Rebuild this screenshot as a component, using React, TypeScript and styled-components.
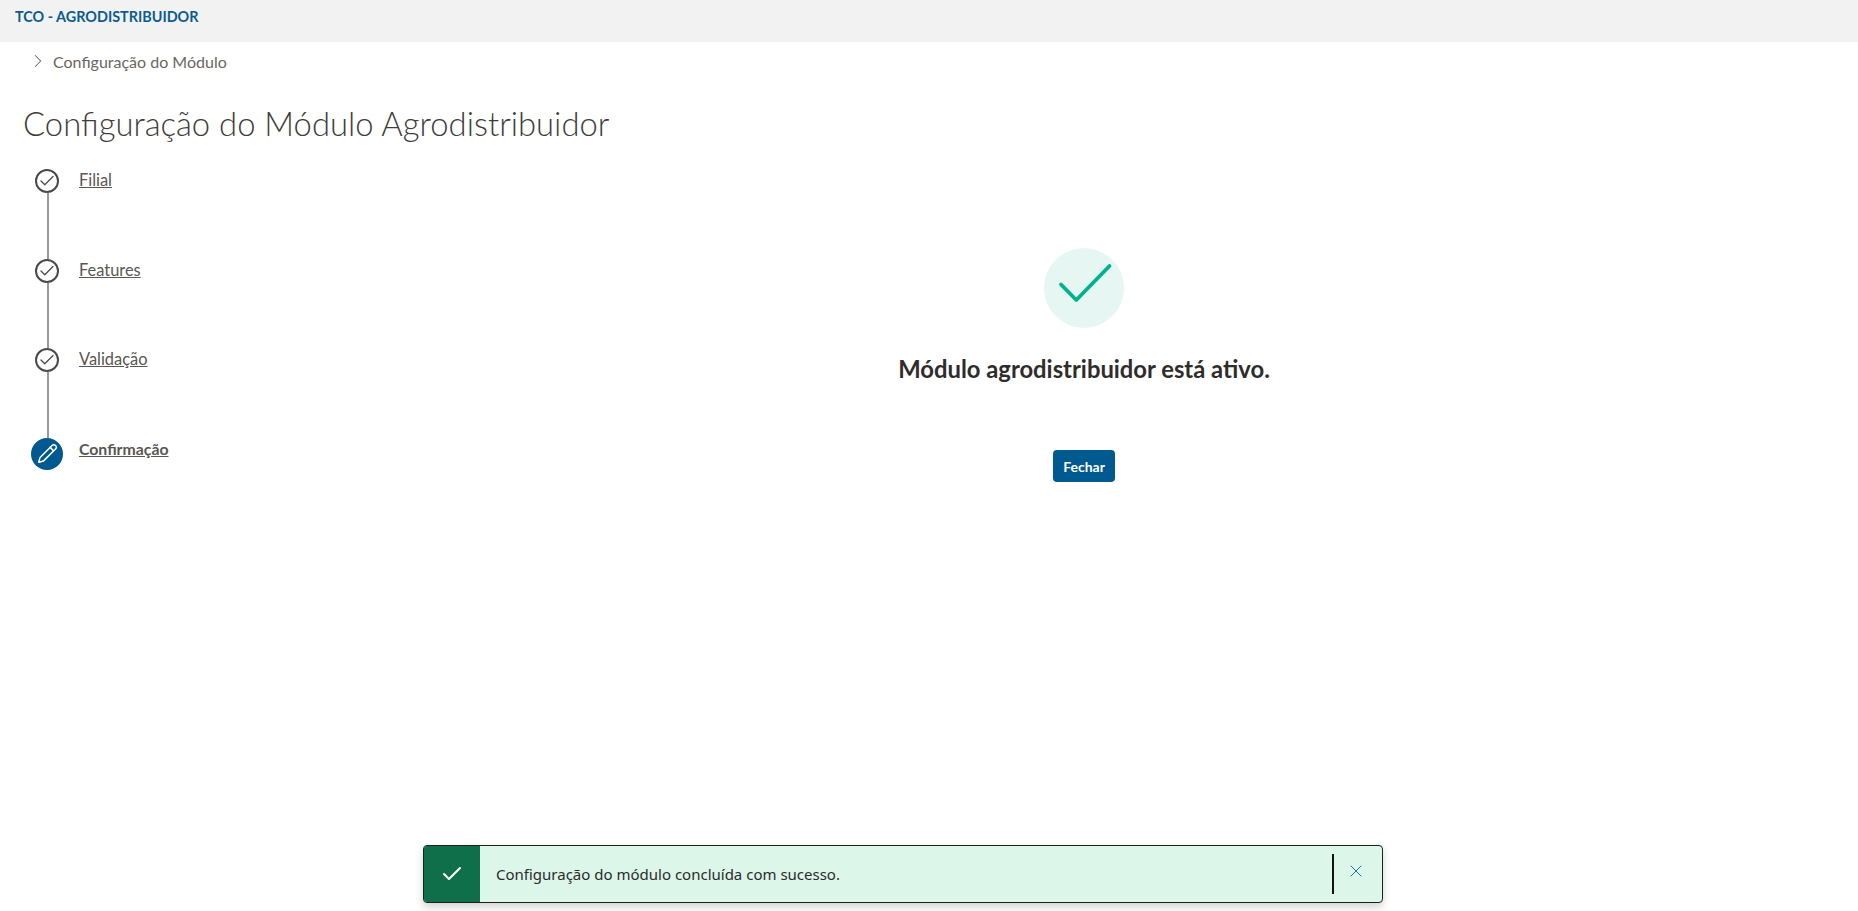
import { createGlobalStyle, styled } from "styled-components";
import { Check, ChevronRight, Pencil, X } from "lucide-react";

const GlobalStyle = createGlobalStyle`
    html, body {
        margin: 0;
        padding: 0;
        background: #fff;
        font-family: "Lato", "Noto Sans", sans-serif;
    }
`;

const Page = styled.div`
    position: relative;
    height: 911px;
    overflow: hidden;
`;

const TopBar = styled.header`
    height: 42px;
    background: #f2f2f2;
    padding: 7px 0 0 15px;
    box-sizing: border-box;
    font-size: 14.4px;
    line-height: 19px;
    font-weight: 700;
    color: #0b5c8f;
`;

const Breadcrumb = styled.nav`
    display: flex;
    align-items: center;
    height: 20px;
    margin-top: 9px;
    padding-left: 27px;
    gap: 4px;
    font-size: 16px;
    color: #6b6664;
`;

const Title = styled.h1`
    margin: 31px 0 0 23px;
    font-size: 32.8px;
    line-height: 44px;
    font-weight: 300;
    color: #3f3c3b;
`;

const Body = styled.div`
    display: grid;
    grid-template-columns: 310px 1fr;
    margin-top: 23px;
`;

const Stepper = styled.ol`
    list-style: none;
    margin: 0;
    padding: 0 0 0 31px;
`;

const Step = styled.li<{ $last?: boolean }>`
    display: flex;
    gap: 16px;
    height: ${(p) => (p.$last ? "32px" : "89.6px")};
`;

const Rail = styled.div`
    display: flex;
    flex-direction: column;
    align-items: center;
    width: 32px;
`;

const Bullet = styled.span<{ $active?: boolean }>`
    display: flex;
    align-items: center;
    justify-content: center;
    flex: none;
    box-sizing: border-box;
    width: ${(p) => (p.$active ? "32px" : "24px")};
    height: ${(p) => (p.$active ? "32px" : "24px")};
    border-radius: 50%;
    border: ${(p) => (p.$active ? "none" : "2px solid #4a4a4a")};
    background: ${(p) => (p.$active ? "#015a8f" : "#fff")};
    color: ${(p) => (p.$active ? "#fff" : "#4a4a4a")};
`;

const Connector = styled.span`
    flex: 1;
    width: 2px;
    margin-left: 1px;
    background: #999;
`;

const StepLabel = styled.a<{ $active?: boolean }>`
    margin-top: 1px;
    font-size: ${(p) => (p.$active ? "15.8px" : "16.4px")};
    line-height: 20px;
    color: #5a5654;
    text-decoration: underline;
    font-weight: ${(p) => (p.$active ? 700 : 400)};
`;

const Main = styled.section`
    display: flex;
    flex-direction: column;
    align-items: center;
    padding-top: 79px;
`;

const SuccessBadge = styled.div`
    display: flex;
    align-items: center;
    justify-content: center;
    width: 80px;
    height: 80px;
    border-radius: 50%;
    background: #e6f7f3;
`;

const Message = styled.h2`
    margin: 25px 0 0;
    font-size: 23.8px;
    line-height: 32px;
    font-weight: 700;
    color: #2f2d2c;
`;

const CloseButton = styled.button`
    width: 62px;
    height: 32px;
    margin-top: 65px;
    padding: 0;
    border: none;
    border-radius: 4px;
    background: #015a8f;
    color: #fff;
    font-family: inherit;
    font-size: 14px;
    font-weight: 700;
`;

const Toast = styled.div`
    position: absolute;
    left: 423px;
    top: 845px;
    display: flex;
    align-items: stretch;
    box-sizing: border-box;
    width: 960px;
    height: 58px;
    border: 1px solid #1f1f1f;
    border-radius: 4px;
    background: #dcf6ea;
    box-shadow: 0 4px 8px rgba(0, 0, 0, 0.18);
    overflow: hidden;
`;

const ToastIcon = styled.div`
    display: flex;
    align-items: center;
    justify-content: center;
    width: 56px;
    background: #0f6f4a;
    color: #fff;
`;

const ToastText = styled.div`
    flex: 1;
    display: flex;
    align-items: center;
    padding-left: 16px;
    font-family: "Noto Sans", sans-serif;
    font-size: 15px;
    color: #2b2b2b;
`;

const ToastDivider = styled.span`
    align-self: center;
    width: 2px;
    height: 40px;
    background: #111;
`;

const ToastClose = styled.button`
    display: flex;
    align-items: center;
    justify-content: center;
    width: 44px;
    margin-right: 4px;
    padding: 0 0 6px;
    border: none;
    background: none;
    color: #1a76b0;
`;

const steps = ["Filial", "Features", "Validação"];

export default function App() {
    return (
        <Page>
            <GlobalStyle />
            <TopBar>TCO - AGRODISTRIBUIDOR</TopBar>
            <Breadcrumb>
                <ChevronRight size={22} strokeWidth={1.1} color="#6b6664" />
                Configuração do Módulo
            </Breadcrumb>
            <Title>Configuração do Módulo Agrodistribuidor</Title>
            <Body>
                <Stepper>
                    {steps.map((s) => (
                        <Step key={s}>
                            <Rail>
                                <Bullet><Check size={18} strokeWidth={1.7} /></Bullet>
                                <Connector />
                            </Rail>
                            <StepLabel>{s}</StepLabel>
                        </Step>
                    ))}
                    <Step $last>
                        <Rail>
                            <Bullet $active><Pencil size={21} strokeWidth={1.7} /></Bullet>
                        </Rail>
                        <StepLabel $active>Confirmação</StepLabel>
                    </Step>
                </Stepper>
                <Main>
                    <SuccessBadge>
                        <svg width="80" height="80" viewBox="0 0 80 80" fill="none">
                            <path d="M17 36.5 L32.3 52 L65.5 18" stroke="#00b28e" strokeWidth="3.8" strokeLinecap="round" strokeLinejoin="round" />
                        </svg>
                    </SuccessBadge>
                    <Message>Módulo agrodistribuidor está ativo.</Message>
                    <CloseButton>Fechar</CloseButton>
                </Main>
            </Body>
            <Toast>
                <ToastIcon><Check size={24} strokeWidth={2} /></ToastIcon>
                <ToastText>Configuração do módulo concluída com sucesso.</ToastText>
                <ToastDivider />
                <ToastClose><X size={20} strokeWidth={1.2} /></ToastClose>
            </Toast>
        </Page>
    );
}
